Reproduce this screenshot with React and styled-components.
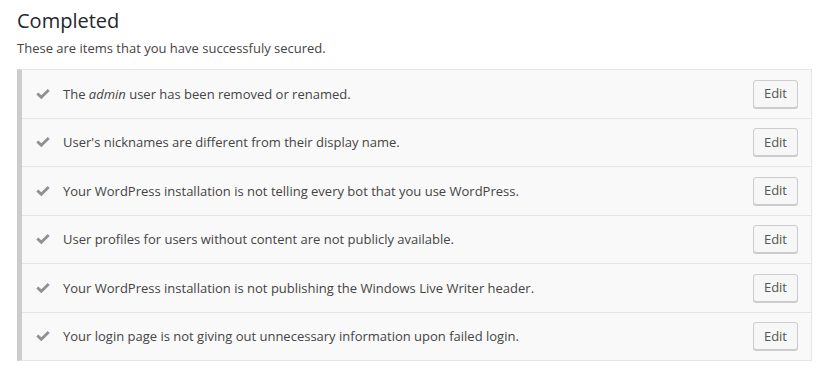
import React from "react";
import styled, { createGlobalStyle } from "styled-components";

const Global = createGlobalStyle`
  html, body { margin: 0; padding: 0; background: #ffffff; }
  body { font-family: "Open Sans", "Liberation Sans", sans-serif; color: #444; }
`;

const Page = styled.div`
  padding: 6px 12px 0 17px;
`;

const Title = styled.h2`
  margin: 0;
  font-size: 20px;
  font-weight: 400;
  line-height: 30px;
  color: #23282d;
`;

const Subtitle = styled.p`
  margin: 2px 0 11px;
  font-size: 13px;
  line-height: 20px;
  color: #444;
`;

const List = styled.ul`
  list-style: none;
  margin: 0;
  padding: 0;
  width: 789px;
  background: #f9f9f9;
  border: 1px solid #e5e5e5;
  border-left: 5px solid #cccccc;
`;

const Row = styled.li`
  display: flex;
  align-items: center;
  height: 47.5px;
  padding: 0 13px 0 14px;
  border-top: ${(p) => (p.$first ? "none" : "1px solid #e5e5e5")};
`;

const Check = styled.svg`
  width: 14px;
  height: 12px;
  flex: none;
  margin-right: 13px;
  fill: #8f9194;
`;

const Label = styled.span`
  flex: 1;
  font-size: 13px;
  line-height: 20px;
  color: #444;
  em { font-style: italic; }
`;

const EditButton = styled.button`
  font-family: "Open Sans", "Liberation Sans", sans-serif;
  font-size: 13px;
  line-height: 25px;
  height: 28px;
  padding: 0 10px;
  color: #555;
  background: #f7f7f7;
  border: 1px solid #cccccc;
  border-radius: 3px;
  box-shadow: 0 1px 0 #cccccc;
  cursor: pointer;
`;

const CheckIcon = () => (
  <Check viewBox="0 0 14 12">
    <path d="M0.3 6.4 L2.3 4.4 L5.3 7.3 L11.7 0.9 L13.7 2.9 L5.3 11.3 Z" />
  </Check>
);

const items = [
  <>The <em>admin</em> user has been removed or renamed.</>,
  <>User's nicknames are different from their display name.</>,
  <>Your WordPress installation is not telling every bot that you use WordPress.</>,
  <>User profiles for users without content are not publicly available.</>,
  <>Your WordPress installation is not publishing the Windows Live Writer header.</>,
  <>Your login page is not giving out unnecessary information upon failed login.</>,
];

export default function App() {
  return (
    <>
      <Global />
      <Page>
        <Title>Completed</Title>
        <Subtitle>These are items that you have successfuly secured.</Subtitle>
        <List>
          {items.map((t, i) => (
            <Row key={i} $first={i === 0}>
              <CheckIcon />
              <Label>{t}</Label>
              <EditButton>Edit</EditButton>
            </Row>
          ))}
        </List>
      </Page>
    </>
  );
}
